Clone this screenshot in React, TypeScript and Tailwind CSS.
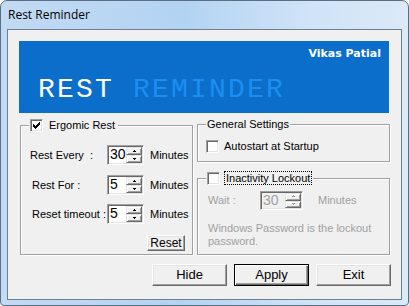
import React from 'react';

function CheckBox({ checked }: { checked?: boolean }) {
  return (
    <span className="flex h-[13px] w-[13px] shrink-0 items-center justify-center border border-t-[#a0a0a0] border-l-[#a0a0a0] border-r-white border-b-white bg-white shadow-[inset_1px_1px_0_#696969,inset_-1px_-1px_0_#e3e3e3]">
      {checked && (
        <svg width="7" height="7" viewBox="0 0 7 7" shapeRendering="crispEdges">
          <path d="M0 2h1v1h1v1h1V3h1V2h1V1h1V0h1v3H6v1H5v1H4v1H3v1H2V6H1V5H0z" fill="#000" />
        </svg>
      )}
    </span>
  );
}

function SpinButton({ up, disabled }: { up?: boolean; disabled?: boolean }) {
  const color = disabled ? '#a0a0a0' : '#000';
  return (
    <span className="flex flex-1 items-center justify-center border border-t-[#e3e3e3] border-l-[#e3e3e3] border-r-[#696969] border-b-[#696969] bg-[#f0f0f0] shadow-[inset_1px_1px_0_#fff,inset_-1px_-1px_0_#a0a0a0]">
      <svg width="5" height="3" viewBox="0 0 5 3" shapeRendering="crispEdges">
        {up ? <path d="M2 0h1v1h1v1H1V1h1z" fill={color} /> : <path d="M1 0h3v1H3v1H2V1H1z" fill={color} />}
      </svg>
    </span>
  );
}

function Spinner({ value, className, disabled }: { value: string; className: string; disabled?: boolean }) {
  return (
    <div
      className={`flex border border-t-[#a0a0a0] border-l-[#a0a0a0] border-r-white border-b-white p-px shadow-[inset_1px_1px_0_#696969,inset_-1px_-1px_0_#e3e3e3] ${className} ${
        disabled ? 'bg-[#f0f0f0] text-[#a0a0a0]' : 'bg-white text-black'
      }`}
    >
      <span className="flex-1 pl-px text-[14px] leading-[15px]">{value}</span>
      <div className="flex w-[16px] flex-col">
        <SpinButton up disabled={disabled} />
        <SpinButton disabled={disabled} />
      </div>
    </div>
  );
}

function Button({ label, isDefault, className }: { label: string; isDefault?: boolean; className: string }) {
  return (
    <button
      className={`flex items-center justify-center bg-[#f0f0f0] ${className} ${
        isDefault
          ? 'border border-black shadow-[inset_1px_1px_0_#fff,inset_-1px_-1px_0_#696969,inset_-2px_-2px_0_#a0a0a0]'
          : 'border border-t-white border-l-white border-r-[#696969] border-b-[#696969] shadow-[inset_-1px_-1px_0_#a0a0a0,inset_1px_1px_0_#e3e3e3]'
      }`}
    >
      {label}
    </button>
  );
}

const groupBox =
  'border border-[#a0a0a0] shadow-[inset_1px_1px_0_#fff,1px_1px_0_#fff]';

export default function App() {
  return (
    <div className="h-[306px] w-[409px] overflow-hidden bg-white">
      <div className="flex h-full w-full flex-col rounded-t-[7px] rounded-b-[4px] border border-[#5c6e84] bg-[linear-gradient(90deg,#c2daf3_0%,#b3d3f3_45%,#cfe3f7_75%,#dbe9f8_100%)] px-[6px] pb-[5px] font-['Liberation_Sans',Arial,sans-serif] text-[11px] text-black">
        <div className="flex h-[28px] items-center pl-px font-['Open_Sans',sans-serif] text-[12px]">Rest Reminder</div>

        <div className="flex flex-1 flex-col border border-[#6f7f90] bg-[#f0f0f0]">
          {/* banner */}
          <div className="ml-[11px] mt-[11px] flex h-[72px] w-[370px] flex-col bg-[#0b6ecb]">
            <div className="self-end pr-[8px] pt-[6px] font-['DejaVu_Sans',sans-serif] text-[11px] font-bold leading-[13px] text-white">
              Vikas Patial
            </div>
            <div className="mt-auto pb-[9px] pl-[19px] font-['Liberation_Mono',monospace] text-[28px] font-light leading-[28px] tracking-[2.2px]">
              <span className="text-white">REST</span> <span className="text-[#1c8ef2]">REMINDER</span>
            </div>
          </div>

          {/* groups */}
          <div className="ml-[12px] mt-[5px] flex gap-[4px]">
            <fieldset className={`h-[137px] w-[173px] ${groupBox}`}>
              <legend className="ml-[8px] flex h-[14px] items-center gap-[6px] bg-[#f0f0f0] px-px">
                <CheckBox checked />
                <span className="pr-[2px]">Ergomic Rest</span>
              </legend>
              <div className="mt-[13px] flex flex-col">
                <div className="flex h-[20px] items-center">
                  <span className="w-[86px] pl-[9px]">Rest Every&nbsp; :</span>
                  <Spinner value="30" className="h-[20px] w-[37px]" />
                  <span className="ml-[6px]">Minutes</span>
                </div>
                <div className="mt-[10px] flex h-[20px] items-center">
                  <span className="w-[86px] pl-[11px]">Rest For :</span>
                  <Spinner value="5" className="h-[20px] w-[37px]" />
                  <span className="ml-[6px]">Minutes</span>
                </div>
                <div className="mt-[9px] flex h-[20px] items-center">
                  <span className="w-[86px] pl-[11px]">Reset timeout :</span>
                  <Spinner value="5" className="h-[20px] w-[37px]" />
                  <span className="ml-[6px]">Minutes</span>
                </div>
                <div className="mt-[11px] flex justify-end pr-[7px]">
                  <Button label="Reset" className="h-[16px] w-[38px] text-[12px]" />
                </div>
              </div>
            </fieldset>

            <div className="flex flex-col">
              <fieldset className={`h-[44px] w-[193px] ${groupBox}`}>
                <legend className="ml-[8px] flex h-[13px] items-center bg-[#f0f0f0] px-px">General Settings</legend>
                <div className="mt-[7px] flex items-center gap-[5px] pl-[8px]">
                  <CheckBox />
                  <span>Autostart at Startup</span>
                </div>
              </fieldset>

              <fieldset className={`mt-[9px] h-[84px] w-[193px] ${groupBox}`}>
                <legend className="ml-[8px] flex h-[14px] items-center gap-[4px] bg-[#f0f0f0] px-px">
                  <CheckBox />
                  <span className="border border-dotted border-black px-px leading-[12px]">Inactivity Lockout</span>
                </legend>
                <div className="mt-[6px] flex items-center pl-[10px] text-[#a0a0a0]">
                  <span className="w-[52px]">Wait :</span>
                  <Spinner value="30" className="h-[19px] w-[43px]" disabled />
                  <span className="ml-[15px]">Minutes</span>
                </div>
                <p className="mt-[12px] pl-[10px] leading-[13px] text-[#a0a0a0]">
                  Windows Password is the lockout
                  <br />
                  password.
                </p>
              </fieldset>
            </div>
          </div>

          {/* buttons */}
          <div className="ml-[144px] mt-[9px] flex gap-[7px] text-[13px]">
            <Button label="Hide" className="h-[22px] w-[75px]" />
            <Button label="Apply" isDefault className="h-[22px] w-[75px]" />
            <Button label="Exit" className="h-[22px] w-[75px]" />
          </div>
        </div>
      </div>
    </div>
  );
}
